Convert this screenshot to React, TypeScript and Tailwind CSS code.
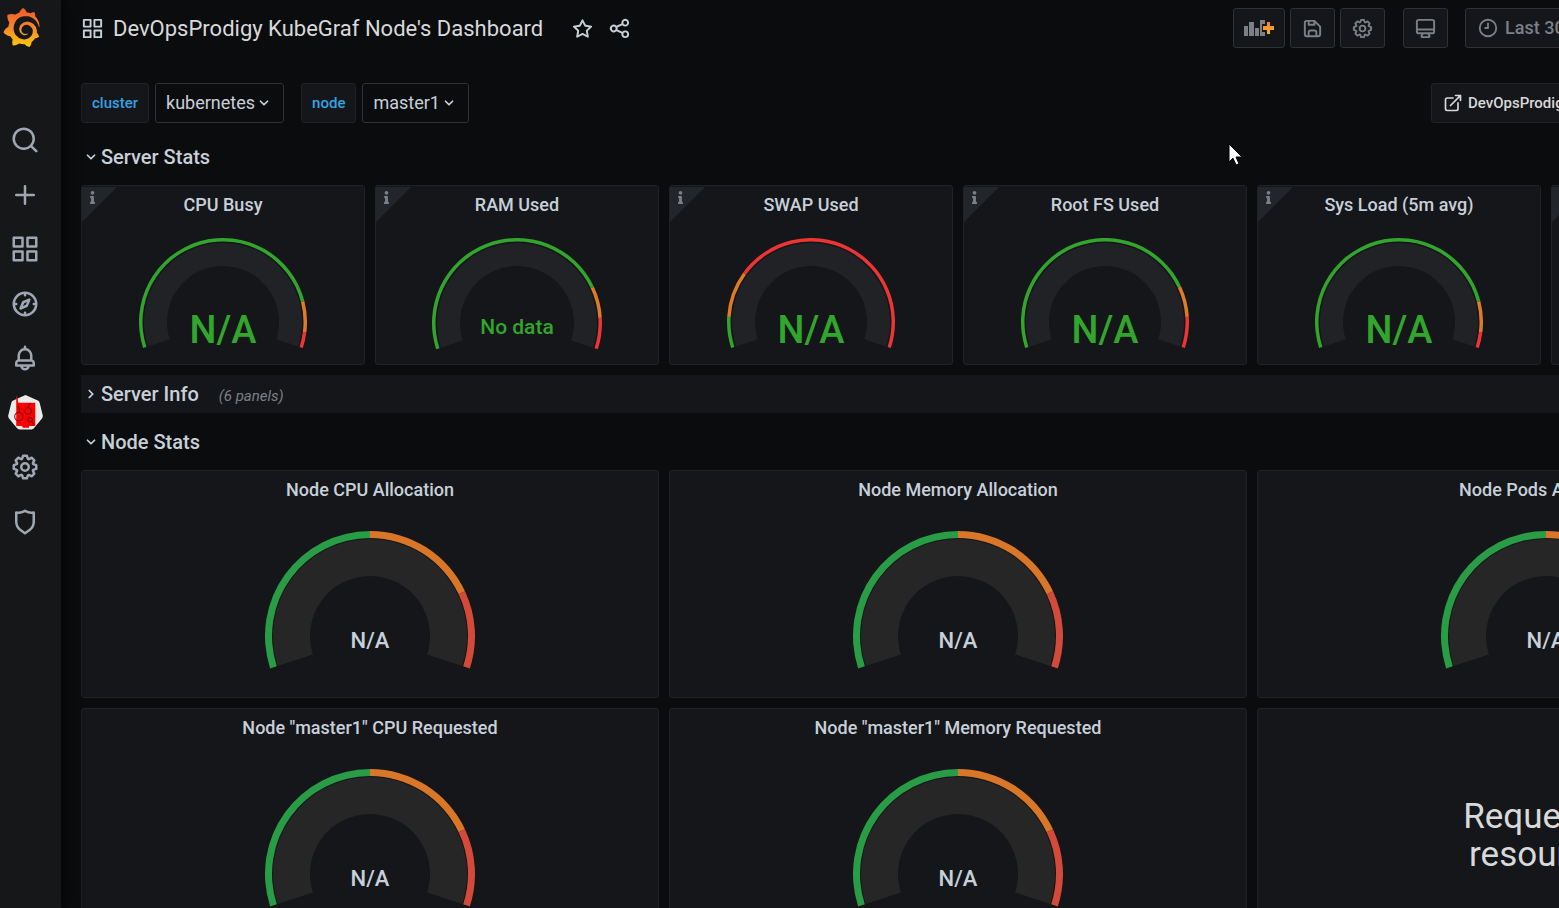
import { useState, type ReactNode } from "react";
import { FaInfo } from "react-icons/fa";
import { SiGrafana } from "react-icons/si";

const ICONS = {
  search:
    "M21.71,20.29,18,16.61A9,9,0,1,0,16.61,18l3.68,3.68a1,1,0,0,0,1.42,0A1,1,0,0,0,21.71,20.29ZM11,18a7,7,0,1,1,7-7A7,7,0,0,1,11,18Z",
  plus: "M19,11H13V5a1,1,0,0,0-2,0v6H5a1,1,0,0,0,0,2h6v6a1,1,0,0,0,2,0V13h6a1,1,0,0,0,0-2Z",
  apps: "M10,13H3a1,1,0,0,0-1,1v7a1,1,0,0,0,1,1h7a1,1,0,0,0,1-1V14A1,1,0,0,0,10,13ZM9,20H4V15H9ZM21,2H14a1,1,0,0,0-1,1v7a1,1,0,0,0,1,1h7a1,1,0,0,0,1-1V3A1,1,0,0,0,21,2ZM20,9H15V4h5Zm1,4H14a1,1,0,0,0-1,1v7a1,1,0,0,0,1,1h7a1,1,0,0,0,1-1V14A1,1,0,0,0,21,13Zm-1,7H15V15h5ZM10,2H3A1,1,0,0,0,2,3v7a1,1,0,0,0,1,1h7a1,1,0,0,0,1-1V3A1,1,0,0,0,10,2ZM9,9H4V4H9Z",
  compass:
    "M12,2A10,10,0,1,0,22,12,10,10,0,0,0,12,2Zm1,17.93V19a1,1,0,0,0-2,0v.93A8,8,0,0,1,4.07,13H5a1,1,0,0,0,0-2H4.07A8,8,0,0,1,11,4.07V5a1,1,0,0,0,2,0V4.07A8,8,0,0,1,19.93,11H19a1,1,0,0,0,0,2h.93A8,8,0,0,1,13,19.93ZM15.14,7.55l-5,2.12a1,1,0,0,0-.52.52l-2.12,5a1,1,0,0,0,.21,1.1,1,1,0,0,0,.7.3.93.93,0,0,0,.4-.09l5-2.12a1,1,0,0,0,.52-.52l2.12-5a1,1,0,0,0-1.31-1.31Zm-2.49,5.1-2.28,1,1-2.28,2.28-1Z",
  bell: "M18,13.18V10a6,6,0,0,0-5-5.91V3a1,1,0,0,0-2,0V4.09A6,6,0,0,0,6,10v3.18A3,3,0,0,0,4,16v2a1,1,0,0,0,1,1H8.14a4,4,0,0,0,7.72,0H19a1,1,0,0,0,1-1V16A3,3,0,0,0,18,13.18ZM8,10a4,4,0,0,1,8,0v3H8Zm4,10a2,2,0,0,1-1.72-1h3.44A2,2,0,0,1,12,20Zm6-3H6V16a1,1,0,0,1,1-1H17a1,1,0,0,1,1,1Z",
  cog: "M21.32,9.55l-1.89-.63.89-1.78A1,1,0,0,0,20.13,6L18,3.87a1,1,0,0,0-1.15-.19l-1.78.89-.63-1.89A1,1,0,0,0,13.5,2h-3a1,1,0,0,0-.95.68L8.92,4.57,7.14,3.68A1,1,0,0,0,6,3.87L3.87,6a1,1,0,0,0-.19,1.15l.89,1.78-1.89.63A1,1,0,0,0,2,10.5v3a1,1,0,0,0,.68.95l1.89.63-.89,1.78A1,1,0,0,0,3.87,18L6,20.13a1,1,0,0,0,1.15.19l1.78-.89.63,1.89a1,1,0,0,0,.95.68h3a1,1,0,0,0,.95-.68l.63-1.89,1.78.89A1,1,0,0,0,18,20.13L20.13,18a1,1,0,0,0,.19-1.15l-.89-1.78,1.89-.63A1,1,0,0,0,22,13.5v-3A1,1,0,0,0,21.32,9.55ZM20,12.78l-1.2.4A2,2,0,0,0,17.64,16l.57,1.14-1.1,1.1L16,17.64a2,2,0,0,0-2.79,1.16l-.4,1.2H11.22l-.4-1.2A2,2,0,0,0,8,17.64l-1.14.57-1.1-1.1L6.36,16A2,2,0,0,0,5.2,13.18L4,12.78V11.22l1.2-.4A2,2,0,0,0,6.36,8L5.79,6.89l1.1-1.1L8,6.36A2,2,0,0,0,10.82,5.2l.4-1.2h1.56l.4,1.2A2,2,0,0,0,16,6.36l1.14-.57,1.1,1.1L17.64,8a2,2,0,0,0,1.16,2.79l1.2.4ZM12,8a4,4,0,1,0,4,4A4,4,0,0,0,12,8Zm0,6a2,2,0,1,1,2-2A2,2,0,0,1,12,14Z",
  shield:
    "M19.63,3.65a1,1,0,0,0-.84-.2,8,8,0,0,1-6.22-1.27,1,1,0,0,0-1.14,0A8,8,0,0,1,5.21,3.45a1,1,0,0,0-.84.2A1,1,0,0,0,4,4.43v7.45a9,9,0,0,0,3.77,7.33l3.65,2.6a1,1,0,0,0,1.16,0l3.65-2.6A9,9,0,0,0,20,11.88V4.43A1,1,0,0,0,19.63,3.65ZM18,11.88a7,7,0,0,1-2.93,5.7L12,19.77,8.93,17.58A7,7,0,0,1,6,11.88V5.58a10,10,0,0,0,6-1.39,10,10,0,0,0,6,1.39Z",
  star: "M22,9.67A1,1,0,0,0,21.14,9l-5.69-.83L12.9,3a1,1,0,0,0-1.8,0L8.55,8.16,2.86,9a1,1,0,0,0-.81.68,1,1,0,0,0,.25,1l4.13,4-1,5.68A1,1,0,0,0,6.9,21.44L12,18.77l5.1,2.67a.93.93,0,0,0,.46.12,1,1,0,0,0,.59-.19,1,1,0,0,0,.4-1l-1-5.68,4.13-4A1,1,0,0,0,22,9.67Zm-6.15,4a1,1,0,0,0-.29.88l.72,4.2-3.76-2a1.06,1.06,0,0,0-.94,0l-3.76,2,.72-4.2a1,1,0,0,0-.29-.88l-3-3,4.21-.61a1,1,0,0,0,.76-.55L12,5.7l1.88,3.82a1,1,0,0,0,.76.55l4.21.61Z",
  share:
    "M18,14a4,4,0,0,0-3.08,1.48l-5.1-2.35a3.64,3.64,0,0,0,0-2.26l5.1-2.35A4,4,0,1,0,14,6a4.17,4.17,0,0,0,.07.71L8.79,9.14a4,4,0,1,0,0,5.72l5.28,2.43A4.17,4.17,0,0,0,14,18a4,4,0,1,0,4-4ZM18,4a2,2,0,1,1-2,2A2,2,0,0,1,18,4ZM6,14a2,2,0,1,1,2-2A2,2,0,0,1,6,14Zm12,6a2,2,0,1,1,2-2A2,2,0,0,1,18,20Z",
  save: "M20.71,9.29l-6-6a1,1,0,0,0-.32-.21A1.09,1.09,0,0,0,14,3H6A3,3,0,0,0,3,6V18a3,3,0,0,0,3,3H18a3,3,0,0,0,3-3V10A1,1,0,0,0,20.71,9.29ZM9,5h4V7H9Zm6,14H9V16a1,1,0,0,1,1-1h4a1,1,0,0,1,1,1Zm4-1a1,1,0,0,1-1,1H17V16a3,3,0,0,0-3-3H10a3,3,0,0,0-3,3v3H6a1,1,0,0,1-1-1V6A1,1,0,0,1,6,5H7V8A1,1,0,0,0,8,9h6a1,1,0,0,0,1-1V6.41l4,4Z",
  monitor:
    "M19,2H5A3,3,0,0,0,2,5V15a3,3,0,0,0,3,3H7.64l-.58,1a2,2,0,0,0,0,2,2,2,0,0,0,1.75,1h6.46A2,2,0,0,0,17,21a2,2,0,0,0,0-2l-.59-1H19a3,3,0,0,0,3-3V5A3,3,0,0,0,19,2ZM8.77,20,10,18H14l1.2,2ZM20,15a1,1,0,0,1-1,1H5a1,1,0,0,1-1-1V14H20Zm0-3H4V5A1,1,0,0,1,5,4H19a1,1,0,0,1,1,1Z",
  clock:
    "M12,2A10,10,0,1,0,22,12,10,10,0,0,0,12,2Zm0,18a8,8,0,1,1,8-8A8,8,0,0,1,12,20ZM12,6a1,1,0,0,0-1,1v4H9a1,1,0,0,0,0,2h3a1,1,0,0,0,1-1V7A1,1,0,0,0,12,6Z",
  external:
    "M18,10.82a1,1,0,0,0-1,1V19a1,1,0,0,1-1,1H5a1,1,0,0,1-1-1V8A1,1,0,0,1,5,7h7.18a1,1,0,0,0,0-2H5A3,3,0,0,0,2,8V19a3,3,0,0,0,3,3H16a3,3,0,0,0,3-3V11.82A1,1,0,0,0,18,10.82Zm3.92-8.2a1,1,0,0,0-.54-.54A1,1,0,0,0,21,2H15a1,1,0,0,0,0,2h3.59L8.29,14.29a1,1,0,0,0,0,1.42,1,1,0,0,0,1.42,0L20,5.41V9a1,1,0,0,0,2,0V3A1,1,0,0,0,21.92,2.62Z",
  down: "M17,9.17a1,1,0,0,0-1.41,0L12,12.71,8.46,9.17a1,1,0,0,0-1.41,0,1,1,0,0,0,0,1.42l4.24,4.24a1,1,0,0,0,1.42,0L17,10.59A1,1,0,0,0,17,9.17Z",
  right:
    "M14.83,11.29,10.59,7.05a1,1,0,0,0-1.42,0,1,1,0,0,0,0,1.41L12.71,12,9.17,15.54a1,1,0,0,0,0,1.41,1,1,0,0,0,.71.29,1,1,0,0,0,.71-.29l4.24-4.24A1,1,0,0,0,14.83,11.29Z",
};

function Icon({ name, className }: { name: keyof typeof ICONS; className: string }) {
  return (
    <svg viewBox="0 0 24 24" className={`shrink-0 fill-current ${className}`} aria-hidden="true">
      <path d={ICONS[name]} />
    </svg>
  );
}

function KubeGrafLogo() {
  return (
    <svg viewBox="0 0 34 34" className="size-[35px]" aria-hidden="true">
      <path
        d="M17 0 29.500 5.700Q30.500 6.400 30.800 7.800L33.800 20Q34 21.400 33.200 22.500L25.200 32.400Q24.300 33.500 22.900 33.500H11.100Q9.700 33.500 8.800 32.400L0.800 22.500Q0 21.400 0.200 20L3.200 7.800Q3.500 6.400 4.500 5.700Z"
        fill="#ebebea"
      />
      <path d="M8 1.500H9L10 7.500H26.500V30H20.500V31.800H14V30H8Z" fill="#fb0000" />
      <g fill="none" stroke="#7c0606" strokeWidth="1">
        <circle cx="10.500" cy="21" r="4" />
        <circle cx="19.500" cy="15.500" r="3.200" />
        <circle cx="21.500" cy="24" r="2.200" />
        <path d="M11 17V13L9.500 10.500M20 12V10L22 8M23 26 25 28.500" />
      </g>
    </svg>
  );
}

function AddPanelIcon() {
  return (
    <svg viewBox="0 0 30 16" className="h-4 w-[30px]" aria-hidden="true">
      <defs>
        <linearGradient id="addPanel" x1="0" y1="0" x2="0" y2="1">
          <stop offset="0" stopColor="#f0842c" />
          <stop offset="1" stopColor="#fbb023" />
        </linearGradient>
      </defs>
      <path d="M0 6h4v10H0zM5 2h5v14H5zM11 8h4v8h-4zM16 0h5v4h-3v8h3v4h-5z" fill="#7b8087" />
      <path d="M23 2h3v4h4v4h-4v4h-3v-4h-4V6h4z" fill="url(#addPanel)" />
    </svg>
  );
}

const NAV: { label: string; icon: ReactNode }[] = [
  { label: "Search", icon: <Icon name="search" className="size-[30px]" /> },
  { label: "Create", icon: <Icon name="plus" className="size-[30px]" /> },
  { label: "Dashboards", icon: <Icon name="apps" className="size-[30px]" /> },
  { label: "Explore", icon: <Icon name="compass" className="size-[30px]" /> },
  { label: "Alerting", icon: <Icon name="bell" className="size-[30px]" /> },
  { label: "KubeGraf", icon: <KubeGrafLogo /> },
  { label: "Configuration", icon: <Icon name="cog" className="size-[30px]" /> },
  { label: "Server Admin", icon: <Icon name="shield" className="size-[30px]" /> },
];

function Sidebar() {
  return (
    <nav className="z-10 flex w-[61px] shrink-0 flex-col bg-[#161719] text-[#9fa7b3] shadow-[0_0_20px_#000]">
      <a href="#home" aria-label="Home" className="flex h-[113px] items-start pt-2 pl-[2px]">
        <svg className="size-0" aria-hidden="true">
          <defs>
            <linearGradient id="grafanaLogo" x1="0" y1="0" x2="0" y2="1">
              <stop offset="0" stopColor="#f05a28" />
              <stop offset="0.500" stopColor="#f8862b" />
              <stop offset="1" stopColor="#fbca0a" />
            </linearGradient>
          </defs>
        </svg>
        <SiGrafana className="size-[39px]" fill="url(#grafanaLogo)" />
      </a>
      <ul className="flex h-[436px] flex-col">
        {NAV.map((item) => (
          <li key={item.label} className="flex flex-1 items-center">
            <a href="#nav" aria-label={item.label} className="flex w-[50px] justify-center">
              {item.icon}
            </a>
          </li>
        ))}
      </ul>
    </nav>
  );
}

function ToolButton({ label, children }: { label: string; children: ReactNode }) {
  return (
    <button
      type="button"
      aria-label={label}
      className="flex h-10 items-center justify-center rounded-[3px] border border-[#2c3235] bg-[#141619] px-[10px] text-[#7b8087]"
    >
      {children}
    </button>
  );
}

function Header() {
  return (
    <header className="flex h-14 items-center justify-between">
      <div className="flex items-center text-[#c7d0d9]">
        <Icon name="apps" className="size-[23px]" />
        <h1 className="ml-[9px] pt-[2px] text-[22px] leading-7 text-[#d8d9da]">DevOpsProdigy KubeGraf Node's Dashboard</h1>
        <button type="button" aria-label="Mark as favorite" className="ml-7">
          <Icon name="star" className="size-[23px]" />
        </button>
        <button type="button" aria-label="Share dashboard" className="ml-[14px]">
          <Icon name="share" className="size-[23px]" />
        </button>
      </div>
      <div className="flex">
        <div className="flex gap-[5px]">
          <ToolButton label="Add panel">
            <AddPanelIcon />
          </ToolButton>
          <ToolButton label="Save dashboard">
            <Icon name="save" className="size-[23px]" />
          </ToolButton>
          <ToolButton label="Dashboard settings">
            <Icon name="cog" className="size-[23px]" />
          </ToolButton>
        </div>
        <div className="mr-[17px] ml-[18px]">
          <ToolButton label="Cycle view mode">
            <Icon name="monitor" className="size-[23px]" />
          </ToolButton>
        </div>
        <button
          type="button"
          className="flex h-10 w-[370px] items-center gap-[6px] rounded-[3px] border border-[#2c3235] bg-[#141619] px-[11px] text-[18px] leading-6 font-medium text-[#7b8087]"
        >
          <Icon name="clock" className="size-[22px]" />
          Last 30 minutes
        </button>
      </div>
    </header>
  );
}

function Variable({ name, value, width }: { name: string; value: string; width: string }) {
  return (
    <div className="flex gap-[6px]">
      <label
        htmlFor={name}
        className="flex h-10 items-center rounded-[3px] border border-[#202226] bg-[#141619] px-[10px] text-[15px] font-medium text-[#33a2e5]"
      >
        {name}
      </label>
      <div className="relative">
        <select
          id={name}
          className={`h-10 appearance-none rounded-[3px] border border-[#2c3235] bg-[#0b0c0e] pb-[2px] pl-[10px] text-[18px] text-[#c7d0d9] ${width}`}
        >
          <option>{value}</option>
        </select>
        <span className="pointer-events-none absolute inset-y-0 right-[10px] flex items-center text-[#c7d0d9]">
          <Icon name="down" className="size-5" />
        </span>
      </div>
    </div>
  );
}

type Band = { to: number; color: string };

type GaugeSpec = {
  size: number;
  ring: number;
  inner: number;
  outer: number;
  face: string;
  text: string;
  textSize: number;
  textColor: string;
  textDrop: number;
  bands: Band[];
};

const START = 198;
const SWEEP = 216;

function arc(c: number, r0: number, r1: number, from: number, to: number) {
  const at = (r: number, t: number) => {
    const a = ((START - SWEEP * t) * Math.PI) / 180;
    return `${(c + r * Math.cos(a)).toFixed(2)} ${(c - r * Math.sin(a)).toFixed(2)}`;
  };
  const large = (to - from) * SWEEP > 180 ? 1 : 0;
  return `M${at(r1, from)}A${r1} ${r1} 0 ${large} 1 ${at(r1, to)}L${at(r0, to)}A${r0} ${r0} 0 ${large} 0 ${at(r0, from)}Z`;
}

function Gauge({ size, ring, inner, outer, face, text, textSize, textColor, textDrop, bands }: GaugeSpec) {
  const height = Math.floor(size * 1.48);
  return (
    <svg width={size * 2} height={height} viewBox={`0 0 ${size * 2} ${height}`} role="img" aria-label={text}>
      <path d={arc(size, inner, outer, 0, 1)} fill={face} />
      {bands.map((band, i) => (
        <path key={band.to} d={arc(size, size - ring, size, i ? bands[i - 1].to : 0, band.to)} fill={band.color} />
      ))}
      <text x={size} y={size + textDrop} textAnchor="middle" fontSize={textSize} fontWeight="500" fill={textColor}>
        {text}
      </text>
    </svg>
  );
}

const GREEN = "#32a62c";
const ORANGE = "#df7b27";
const RED = "#ee3434";

function StatGauge({ text, marks }: { text: string; marks: [number, number] }) {
  const empty = text === "N/A";
  const size = empty ? 84 : 85;
  return (
    <Gauge
      size={size}
      ring={3.5}
      inner={size - 28}
      outer={size - 5}
      face="#212226"
      text={text}
      textSize={empty ? 38 : 21}
      textColor={GREEN}
      textDrop={empty ? 21 : 11}
      bands={[
        { to: marks[0], color: GREEN },
        { to: marks[1], color: ORANGE },
        { to: 1, color: RED },
      ]}
    />
  );
}

function NodeGauge() {
  return (
    <Gauge
      size={105}
      ring={7}
      inner={60}
      outer={97}
      face="#262626"
      text="N/A"
      textSize={22}
      textColor="#c7d0d9"
      textDrop={12}
      bands={[
        { to: 0.5, color: "#299c46" },
        { to: 0.8, color: "#d97627" },
        { to: 1, color: "#d44a3a" },
      ]}
    />
  );
}

function Panel({ title, info, className, children }: { title?: string; info?: boolean; className: string; children?: ReactNode }) {
  return (
    <section className={`relative flex flex-col items-center rounded-[3px] border border-[#202226] bg-[#141619] ${className}`}>
      {info && (
        <span className="absolute top-px left-0 h-[35px] w-[35px] bg-[#22252a] text-[#7b8087] [clip-path:polygon(0_0,100%_0,0_100%)]">
          <FaInfo className="mt-1 ml-1 size-[13px]" />
        </span>
      )}
      {title && <h2 className="mt-[7px] text-[18px] leading-6 font-medium text-[#c7d0d9]">{title}</h2>}
      {children}
    </section>
  );
}

function RowHeader({ title, note, initial = true }: { title: string; note?: string; initial?: boolean }) {
  const [open, setOpen] = useState(initial);
  return (
    <button
      type="button"
      aria-expanded={open}
      onClick={() => setOpen(!open)}
      className={open ? "flex h-[37px] w-full items-center text-[#c7d0d9]" : "flex h-[38px] w-full items-center bg-[#141619] text-[#c7d0d9]"}
    >
      <Icon name={open ? "down" : "right"} className="size-5" />
      <span className="text-[20px] font-medium">{title}</span>
      {note && <span className="ml-5 pt-1 text-[15px] text-[#7b8087] italic">{note}</span>}
    </button>
  );
}

const STATS: { title: string; text: string; marks: [number, number] }[] = [
  { title: "CPU Busy", text: "N/A", marks: [0.85, 0.95] },
  { title: "RAM Used", text: "No data", marks: [0.8, 0.9] },
  { title: "SWAP Used", text: "N/A", marks: [0.1, 0.25] },
  { title: "Root FS Used", text: "N/A", marks: [0.8, 0.9] },
  { title: "Sys Load (5m avg)", text: "N/A", marks: [0.85, 0.95] },
];

const NODE_PANELS = [
  "Node CPU Allocation",
  "Node Memory Allocation",
  "Node Pods Allocation",
  'Node "master1" CPU Requested',
  'Node "master1" Memory Requested',
];

export default function App() {
  return (
    <div className="relative flex h-screen overflow-hidden bg-[#0b0c0e] font-[Roboto,sans-serif]">
      <Sidebar />
      <main className="min-w-[1794px] flex-1 px-5">
        <Header />
        <div className="mt-[27px] flex items-start justify-between">
          <div className="flex gap-[17px]">
            <Variable name="cluster" value="kubernetes" width="w-[129px]" />
            <Variable name="node" value="master1" width="w-[107px]" />
          </div>
          <a
            href="#apps"
            className="flex h-10 w-[404px] items-center gap-[5px] rounded-[3px] border border-[#202226] bg-[#141619] px-[11px] text-[15px] font-medium text-[#d8d9da]"
          >
            <Icon name="external" className="size-5" />
            DevOpsProdigy KubeGraf
          </a>
        </div>
        <div className="mt-[15px] flex flex-col gap-[10px]">
          <RowHeader title="Server Stats" />
          <div className="grid grid-cols-6 gap-[10px]">
            {STATS.map((stat) => (
              <Panel key={stat.title} title={stat.title} info className="h-[180px]">
                <div className="mt-[21px]">
                  <StatGauge text={stat.text} marks={stat.marks} />
                </div>
              </Panel>
            ))}
            <Panel info className="h-[180px]" />
          </div>
          <RowHeader title="Server Info" note="(6 panels)" initial={false} />
          <RowHeader title="Node Stats" />
          <div className="grid grid-cols-3 gap-[10px]">
            {NODE_PANELS.map((title) => (
              <Panel key={title} title={title} className="h-[228px]">
                <div className="mt-[29px]">
                  <NodeGauge />
                </div>
              </Panel>
            ))}
            <Panel className="h-[228px]">
              <p className="mt-[89px] text-center text-[35px] leading-[38px] text-[#d8d9da]">
                Requested
                <br />
                resources
              </p>
            </Panel>
          </div>
        </div>
      </main>
      <svg viewBox="0 0 14 24" className="absolute top-[143px] left-[1228px] h-6 w-[14px]" aria-hidden="true">
        <path d="M1 1v18l4-3.800 3 6.800 3-1.300-3-6.700h6Z" fill="#fff" stroke="#000" strokeWidth="1" />
      </svg>
    </div>
  );
}
